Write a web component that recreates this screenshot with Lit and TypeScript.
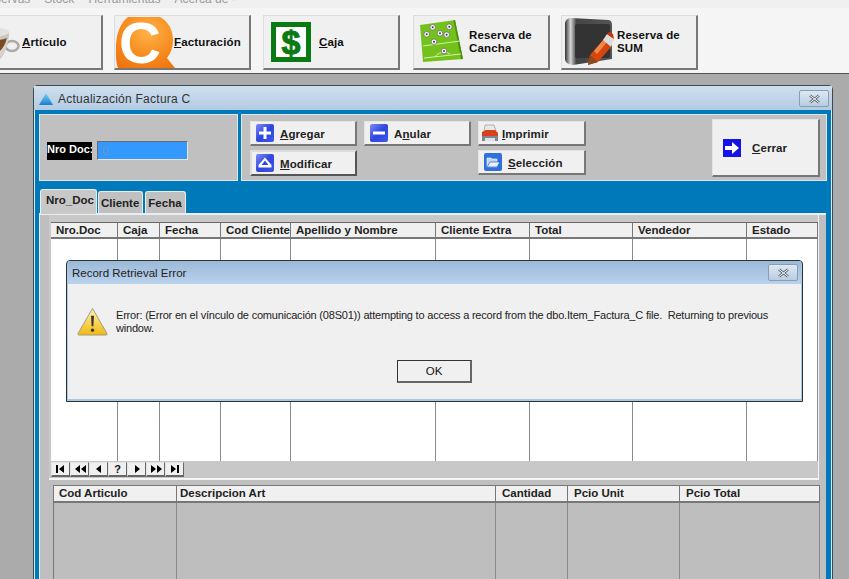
import { LitElement, html, css, svg } from "lit";
import { customElement } from "lit/decorators.js";

const ORDERS = [
  ["Nro.Doc", 67], ["Caja", 42], ["Fecha", 61], ["Cod Cliente", 70], ["Apellido y Nombre", 145],
  ["Cliente Extra", 94], ["Total", 103], ["Vendedor", 114], ["Estado", 71],
] as [string, number][];

const ITEMS = [
  ["Cod Articulo", 124], ["Descripcion Art", 319], ["Cantidad", 72], ["Pcio Unit", 112], ["Pcio Total", 140],
] as [string, number][];

const blueIcon = (glyph: unknown) => html`<svg class="ico" viewBox="0 0 18 18">
  <rect x="0" y="0" width="18" height="18" rx="2" fill="url(#bl)"/>
  <defs><linearGradient id="bl" x1="0" y1="0" x2="1" y2="1"><stop offset="0" stop-color="#7f8cf5"/><stop offset=".5" stop-color="#2f45e0"/><stop offset="1" stop-color="#3f58e8"/></linearGradient></defs>
  ${glyph}
</svg>`;

const cupIcon = html`<svg class="abs" style="left:2px;top:10px" width="54" height="40" viewBox="0 0 54 40">
  <ellipse cx="43" cy="20" rx="6.500" ry="5" fill="none" stroke="#a9a9a9" stroke-width="2.500"/>
  <path d="M4 6h36c0 14-6 30-18 32C10 36 4 20 4 6z" fill="#c9c7c2"/>
  <ellipse cx="22" cy="6" rx="18" ry="5" fill="#e4e2dc"/>
  <path d="M8 12c6 3 24 3 30 0-1 9-6 18-16 20C13 31 9 21 8 12z" fill="#7a4c22"/>
  <path d="M31 25c3-3 6-8 7-13l1 1c-1 8-4 15-8 18z" fill="#d8d4cc"/>
</svg>`;

const orangeC = html`<svg class="abs" style="left:1px;top:1px" width="62" height="52" viewBox="0 0 62 52">
  <defs><radialGradient id="or" cx=".55" cy=".3" r=".8"><stop offset="0" stop-color="#ffb347"/><stop offset=".6" stop-color="#f68a1e"/><stop offset="1" stop-color="#ee7410"/></radialGradient></defs>
  <path d="M12 0h32c8 4 13 13 13 23 0 7-2 13-6 18l8 10H2C0 46 0 40 0 30 0 18 4 6 12 0z" fill="url(#or)"/>
  <text x="24" y="46" text-anchor="middle" font-family="Liberation Sans" font-weight="700" font-size="58" fill="#fff">C</text>
</svg>`;

const dollar = html`<svg class="abs" style="left:7px;top:6px" width="40" height="40" viewBox="0 0 40 40">
  <rect x="2.5" y="2.5" width="35" height="35" fill="#fff" stroke="#0a7a12" stroke-width="5"/>
  <text x="20" y="32" text-anchor="middle" font-family="Liberation Sans" font-weight="700" font-size="34" fill="#0a7a12" stroke="#0a7a12" stroke-width="1">$</text>
</svg>`;

const ball = (x: number, y: number) => svg`<circle cx=${x} cy=${y} r="2.8" fill="#f4f4f4" stroke="#666" stroke-width=".7"/><circle cx=${x} cy=${y} r="1" fill="#444"/>`;

const pitch = html`<svg class="abs" style="left:5px;top:4px" width="46" height="44" viewBox="0 0 46 44">
  <path d="M1 5 36 0l8 39-40 3z" fill="#72c11c"/>
  <path d="M36 0l8 39-2 .2L34.500 .2z" fill="#4c8f10"/>
  <path d="M4 26 41 21M5 38 42 34M16 37c3-5 10-6 15-3" stroke="#d7f0a8" stroke-width="1" fill="none"/>
  ${[[13.7, 7.3], [30.3, 6.7], [7.7, 14.3], [21, 13.3], [27.7, 14.7], [15, 21.7], [25, 31]].map(([x, y]) => ball(x, y))}
</svg>`;

const slate = html`<svg class="abs" style="left:3px;top:1px" width="50" height="50" viewBox="0 0 50 50">
  <defs><linearGradient id="sil" x1="0" y1="0" x2="1" y2="0"><stop offset="0" stop-color="#333"/><stop offset=".12" stop-color="#d6d6d6"/><stop offset=".24" stop-color="#444"/><stop offset="1" stop-color="#555"/></linearGradient></defs>
  <path d="M0 6Q1 1 6 1L44 3Q47 4 47 8V42L8 48Q0 47 0 42z" fill="url(#sil)"/>
  <rect x="10" y="7" width="35" height="34" rx="2" fill="#333"/>
  <path d="M23 48l2-10 13-15 8 7-13 15z" fill="#d8450f"/>
  <path d="M29 34l11-13 3 3-11 13z" fill="#f08a4a"/>
  <path d="M38 23l4-6 7 5-3 8z" fill="#dcdcdc"/>
  <path d="M42 17l2-2 4 2 1 5z" fill="#c8340a"/>
  <path d="M23 48l2-10 8 7z" fill="#8a4a20"/>
</svg>`;

const printer = html`<svg class="ico" viewBox="0 0 18 18">
  <path d="M4 1h9l2 6H3z" fill="#e8e8e8" stroke="#888" stroke-width=".6"/>
  <path d="M1 8l4-2h9l3 3v4H1z" fill="#d8401a"/>
  <rect x="1" y="12" width="16" height="5" fill="#7d8794"/>
  <rect x="4" y="14" width="10" height="3" fill="#dfe3e8"/>
</svg>`;

const folder = html`<svg class="ico" viewBox="0 0 18 18">
  <rect width="18" height="18" rx="2" fill="#2f6fe0"/>
  <path d="M3 5h4l1 1h5v8H3z" fill="#bcd7f7" stroke="#fff" stroke-width=".6"/>
  <path d="M6 9h10l-3 5H3z" fill="#e8f1fc" stroke="#1d4fa8" stroke-width=".6"/>
</svg>`;

const warning = html`<svg class="warn" viewBox="0 0 32 30">
  <defs><linearGradient id="wg" x1="0" y1="0" x2="0" y2="1"><stop offset="0" stop-color="#fff3a8"/><stop offset="1" stop-color="#f2b90f"/></linearGradient></defs>
  <path d="M16 1.500 31 27.500c.3 1-.3 1.500-1 1.500H2c-.7 0-1.300-.5-1-1.500z" fill="url(#wg)" stroke="#9a9a8c" stroke-width="1"/>
  <path d="M14.500 9h3l-.6 11h-1.800z" fill="#333"/>
  <circle cx="16" cy="24" r="1.700" fill="#333"/>
</svg>`;

const navIcons = [
  svg`<rect x="1" y="2" width="2" height="8"/><path d="M9 2v8L4 6z"/>`,
  svg`<path d="M6 2v8L1 6zM12 2v8L7 6z"/>`,
  svg`<path d="M8 2v8L3 6z"/>`,
  null,
  svg`<path d="M4 2v8l5-4z"/>`,
  svg`<path d="M1 2v8l5-4zM7 2v8l5-4z"/>`,
  svg`<path d="M2 2v8l5-4z"/><rect x="8" y="2" width="2" height="8"/>`,
];

@customElement("app-root")
export class AppRoot extends LitElement {
  static override styles = css`
    :host {
      display: block;
      position: relative;
      width: 849px;
      height: 579px;
      overflow: hidden;
      font-family: "Liberation Sans", Arial, sans-serif;
      background: #ababab;
      color: #111;
    }
    .menu {
      height: 8px;
      overflow: hidden;
      background: #f0f0f0;
      display: flex;
      gap: 14px;
      font-size: 12px;
      line-height: 12px;
      color: #9a9a9a;
    }
    .menu span {
      margin-top: -7px;
    }
    .menu span:first-child {
      margin-left: -7px;
    }
    .toolbar {
      height: 66px;
      box-sizing: border-box;
      padding: 7px 0 0 0;
      background: #f5f5f5;
      border-bottom: 1px solid #555;
      display: flex;
    }
    .tb {
      position: relative;
      flex: none;
      width: 137px;
      height: 55px;
      box-sizing: border-box;
      background: #f0f0f0;
      border: 1px solid #dcdcdc;
      border-right: 2px solid #777;
      border-bottom: 2px solid #777;
      font-size: 11.500px;
      font-weight: 700;
      letter-spacing: 0.15px;
      line-height: 13px;
      display: flex;
      align-items: center;
    }
    .tb.a { margin-left: -34px; }
    .tb.b { margin-left: 11px; }
    .tb.c { margin-left: 12px; }
    .tb.d { margin-left: 13px; }
    .tb.e { margin-left: 11px; }
    .tb .lbl { margin-left: 55px; }
    .tb.b .lbl { margin-left: 59px; }
    .abs { position: absolute; }
    u { text-decoration: underline; text-underline-offset: 1px; }

    .desktop {
      height: 505px;
      padding: 11px 0 0 33px;
      box-sizing: border-box;
    }
    .win {
      width: 800px;
      height: 520px;
      box-sizing: border-box;
      background: #0079bb;
      border: 1px solid #3c4a55;
      border-bottom: 0;
      border-radius: 5px 5px 0 0;
      display: flex;
      flex-direction: column;
      box-shadow: inset 0 0 0 1px #dcebf5;
    }
    .wintitle {
      flex: none;
      height: 24px;
      background: linear-gradient(#cfdfee, #b3cbe3);
      display: flex;
      align-items: center;
      padding: 1px 3px 0 4px;
      box-sizing: border-box;
      font-size: 12px;
      color: #333;
      gap: 4px;
    }
    .wintitle .t { flex: 1; letter-spacing: 0.25px; }
    .close {
      width: 30px;
      height: 17px;
      box-sizing: border-box;
      border: 1px solid #8a9cb0;
      border-radius: 2px;
      background: linear-gradient(#dde8f3, #b9cde1);
      display: flex;
      align-items: center;
      justify-content: center;
    }
    .close svg { width: 13px; height: 10px; }
    .winbody {
      flex: 1;
      padding: 4px 5px 0 5px;
      display: flex;
      flex-direction: column;
      box-sizing: border-box;
    }
    .head {
      display: flex;
      gap: 3px;
      height: 67px;
      flex: none;
    }
    .panel {
      background: #c0c0c0;
      box-sizing: border-box;
      border: 1px solid #dfe6ea;
    }
    .find {
      width: 200px;
      display: flex;
      align-items: center;
      padding: 6px 0 0 7px;
      gap: 5px;
    }
    .find label {
      background: #000;
      color: #fff;
      font-size: 11px;
      font-weight: 700;
      width: 45px;
      height: 18px;
      line-height: 15px;
      white-space: nowrap;
      overflow: hidden;
      margin-top: 1px;
    }
    .find .val {
      width: 91px;
      height: 19px;
      box-sizing: border-box;
      background: #3399ff;
      border: 1px solid #e8e8e8;
      border-top-color: #6a6a6a;
      border-left-color: #6a6a6a;
      color: #6f93b8;
      font-size: 11.500px;
      line-height: 18px;
      padding-left: 4px;
    }
    .actions {
      flex: 1;
      display: flex;
      padding: 6px 6px 0 8px;
    }
    .btns {
      display: grid;
      grid-template-columns: 107px 107px 108px;
      grid-auto-rows: 25px;
      row-gap: 4px;
      column-gap: 7px;
    }
    .btn {
      box-sizing: border-box;
      background: #f0f0f0;
      border: 1px solid #e4e4e4;
      border-right: 2px solid #777;
      border-bottom: 2px solid #777;
      display: flex;
      align-items: center;
      padding-left: 5px;
      font-size: 11.500px;
      font-weight: 700;
      letter-spacing: 0.1px;
      gap: 6px;
      color: #222;
    }
    .btn span { margin-top: 1px; }
    .btn.def {
      height: 26px;
      border: 2px solid #555;
      border-top-color: #ddd;
      border-left-color: #ddd;
      padding-left: 4px;
    }
    .btn.print {
      padding-left: 2px;
      gap: 3px;
    }
    .btn.tall {
      width: 108px;
      height: 58px;
      margin: -2px 0 0 126px;
      padding-left: 10px;
      gap: 11px;
    }
    .ico { width: 18px; height: 18px; flex: none; }
    .tabs {
      flex: none;
      display: flex;
      align-items: flex-end;
      height: 32px;
      padding-left: 1px;
      gap: 2px;
    }
    .tab {
      background: #c0c0c0;
      border: 1px solid #e8eef2;
      border-bottom: 0;
      border-radius: 3px 3px 0 0;
      box-sizing: border-box;
      height: 22px;
      font-size: 11.500px;
      font-weight: 700;
      color: #222;
      padding: 5px 3px 0 2px;
    }
    .tab.on {
      position: relative;
      height: 25px;
      background: #c8c8c8;
      padding: 4px 0 0 5px;
      width: 57px;
      z-index: 1;
      margin: 0 -1px -1px 0;
    }
    .page {
      flex: 1;
      width: 787px;
      box-sizing: border-box;
      background: #bfbfbf;
      border-top: 2px solid #e8eef2;
      border-left: 1px solid #e8eef2;
      padding: 0 0 0 9px;
    }
    .upper {
      width: 770px;
      box-sizing: border-box;
      background: #c8c8c8;
      border-right: 1px solid #f4f4f4;
      border-bottom: 2px solid #f4f4f4;
      padding: 7px 0 1px 2px;
    }
    .grid {
      display: grid;
      width: max-content;
    }
    .cell {
      box-sizing: border-box;
      height: 17px;
      background: #f0f0f0;
      border-right: 1px solid #777;
      border-bottom: 2px solid #777;
      border-top: 1px solid #666;
      font-size: 11.500px;
      font-weight: 700;
      line-height: 14px;
      padding-left: 5px;
      white-space: nowrap;
      overflow: hidden;
      color: #222;
    }
    .col {
      box-sizing: border-box;
      height: 222px;
      background: #fff;
      border-right: 1px solid #8a8a8a;
    }
    .nav {
      display: flex;
      margin-top: 1px;
    }
    .nav div {
      width: 19px;
      height: 15px;
      box-sizing: border-box;
      background: #f0f0f0;
      border: 1px solid #e4e4e4;
      border-right: 1px solid #666;
      border-bottom: 2px solid #666;
      display: flex;
      align-items: center;
      justify-content: center;
      font-size: 11px;
      font-weight: 700;
    }
    .nav svg { width: 12px; height: 12px; }
    .items { margin: 5px 0 0 4px; }
    .items .cell {
      height: 18px;
      border-top: 1px solid #777;
      padding-left: 6px;
      line-height: 15px;
    }
    .items .cell:first-child { border-left: 1px solid #777; padding-left: 5px; }
    .items .cell:nth-child(2) { padding-left: 3px; }
    .items .col {
      height: 90px;
      background: #bebebe;
    }
    .items .col.first { border-left: 1px solid #777; }

    .dialog {
      position: absolute;
      left: 66px;
      top: 260px;
      width: 737px;
      height: 142px;
      box-sizing: border-box;
      border: 1px solid #2a3238;
      border-radius: 4px 4px 0 0;
      background: #a9c8e2;
      padding: 0 1px 2px;
      display: flex;
      flex-direction: column;
    }
    .dtitle {
      flex: none;
      height: 23px;
      background: linear-gradient(#9bb9d8, #b9d2ec);
      display: flex;
      align-items: center;
      justify-content: space-between;
      padding: 0 3px 0 4px;
      font-size: 11.500px;
      color: #222;
    }
    .dbody {
      flex: 1;
      background: #f0f0f0;
      display: flex;
      flex-direction: column;
    }
    .msg {
      display: flex;
      gap: 8px;
      padding: 25px 0 0 9px;
      font-size: 11px;
      line-height: 13px;
      color: #222;
    }
    .msg p {
      margin: 0;
      width: 660px;
      letter-spacing: -0.2px;
    }
    .warn { width: 31px; height: 29px; flex: none; margin-top: -2px; }
    .ok {
      align-self: center;
      width: 75px;
      height: 23px;
      box-sizing: border-box;
      margin: 24px 0 0 0;
      background: #f0f0f0;
      border: 1px solid #333;
      border-right: 2px solid #666;
      border-bottom: 2px solid #666;
      font-size: 11.500px;
      line-height: 21px;
      text-align: center;
    }
  `;

  private grid(columns: [string, number][], cls: string) {
    const template = columns.map(([, w]) => `${w}px`).join(" ");
    return html`<div class="grid ${cls}" style="grid-template-columns:${template}">
      ${columns.map(([name]) => html`<div class="cell">${name}</div>`)}
      ${columns.map((_, i) => html`<div class="col ${i === 0 ? "first" : ""}"></div>`)}
    </div>`;
  }

  private closeBox() {
    return html`<div class="close"><svg viewBox="0 0 13 10">
      <path d="M2 1.500l9 7M11 1.500l-9 7" stroke="#5a6470" stroke-width="2.600" fill="none"/>
      <path d="M2 1.500l9 7M11 1.500l-9 7" stroke="#fff" stroke-width="1" fill="none"/>
    </svg></div>`;
  }

  override render() {
    return html`
      <div class="menu">
        <span>Servas</span><span>Stock</span><span>Herramientas</span><span>Acerca de ·</span>
      </div>
      <div class="toolbar">
        <div class="tb a">${cupIcon}<span class="lbl"><u>A</u>rtículo</span></div>
        <div class="tb b">${orangeC}<span class="lbl"><u>F</u>acturación</span></div>
        <div class="tb c">${dollar}<span class="lbl"><u>C</u>aja</span></div>
        <div class="tb d">${pitch}<span class="lbl">Reserva de<br />Cancha</span></div>
        <div class="tb e">${slate}<span class="lbl">Reserva de<br />SUM</span></div>
      </div>
      <div class="desktop">
        <div class="win">
          <div class="wintitle">
            <svg width="16" height="14" viewBox="0 0 16 14">
              <defs><linearGradient id="tr" x1="0" y1="0" x2="0" y2="1"><stop offset="0" stop-color="#7fd0f5"/><stop offset="1" stop-color="#1a7fd0"/></linearGradient></defs>
              <path d="M8 1l7 12H1z" fill="url(#tr)"/>
            </svg>
            <span class="t">Actualización Factura C</span>
            ${this.closeBox()}
          </div>
          <div class="winbody">
            <div class="head">
              <div class="panel find">
                <label>Nro Doc:</label>
                <div class="val">0</div>
              </div>
              <div class="panel actions">
                <div class="btns">
                  <div class="btn">${blueIcon(svg`<path d="M7.500 3h3v4.500H15v3h-4.500V15h-3v-4.500H3v-3h4.500z" fill="#fff"/>`)}<span><u>A</u>gregar</span></div>
                  <div class="btn">${blueIcon(svg`<rect x="3" y="7.500" width="12" height="3" fill="#fff"/>`)}<span>A<u>n</u>ular</span></div>
                  <div class="btn print">${printer}<span><u>I</u>mprimir</span></div>
                  <div class="btn def">${blueIcon(svg`<path d="M9 3.500l6.500 7.500v2.500h-13V11zM9 6.500 5.500 11h7z" fill="#fff" fill-rule="evenodd"/>`)}<span><u>M</u>odificar</span></div>
                  <div></div>
                  <div class="btn">${folder}<span><u>S</u>elección</span></div>
                </div>
                <div class="btn tall">
                  <svg class="ico" viewBox="0 0 18 18">
                    <rect width="18" height="18" fill="#1414e6"/>
                    <path d="M2 7h7V3l7 6-7 6v-4H2z" fill="#fff"/>
                  </svg>
                  <span><u>C</u>errar</span>
                </div>
              </div>
            </div>
            <div class="tabs">
              <div class="tab on">Nro_Doc</div>
              <div class="tab">Cliente</div>
              <div class="tab">Fecha</div>
            </div>
            <div class="page">
              <div class="upper">
                ${this.grid(ORDERS, "orders")}
                <div class="nav">
                  ${navIcons.map((icon) => html`<div>${icon ? html`<svg viewBox="0 0 12 12">${icon}</svg>` : "?"}</div>`)}
                </div>
              </div>
              ${this.grid(ITEMS, "items")}
            </div>
          </div>
        </div>
      </div>
      <div class="dialog">
        <div class="dtitle">
          <span>Record Retrieval Error</span>
          ${this.closeBox()}
        </div>
        <div class="dbody">
          <div class="msg">
            ${warning}
            <p>Error: (Error en el vínculo de comunicación (08S01)) attempting to access a record from the dbo.Item_Factura_C file.&nbsp; Returning to previous window.</p>
          </div>
          <div class="ok">OK</div>
        </div>
      </div>
    `;
  }
}

declare global {
  interface HTMLElementTagNameMap {
    "app-root": AppRoot;
  }
}
